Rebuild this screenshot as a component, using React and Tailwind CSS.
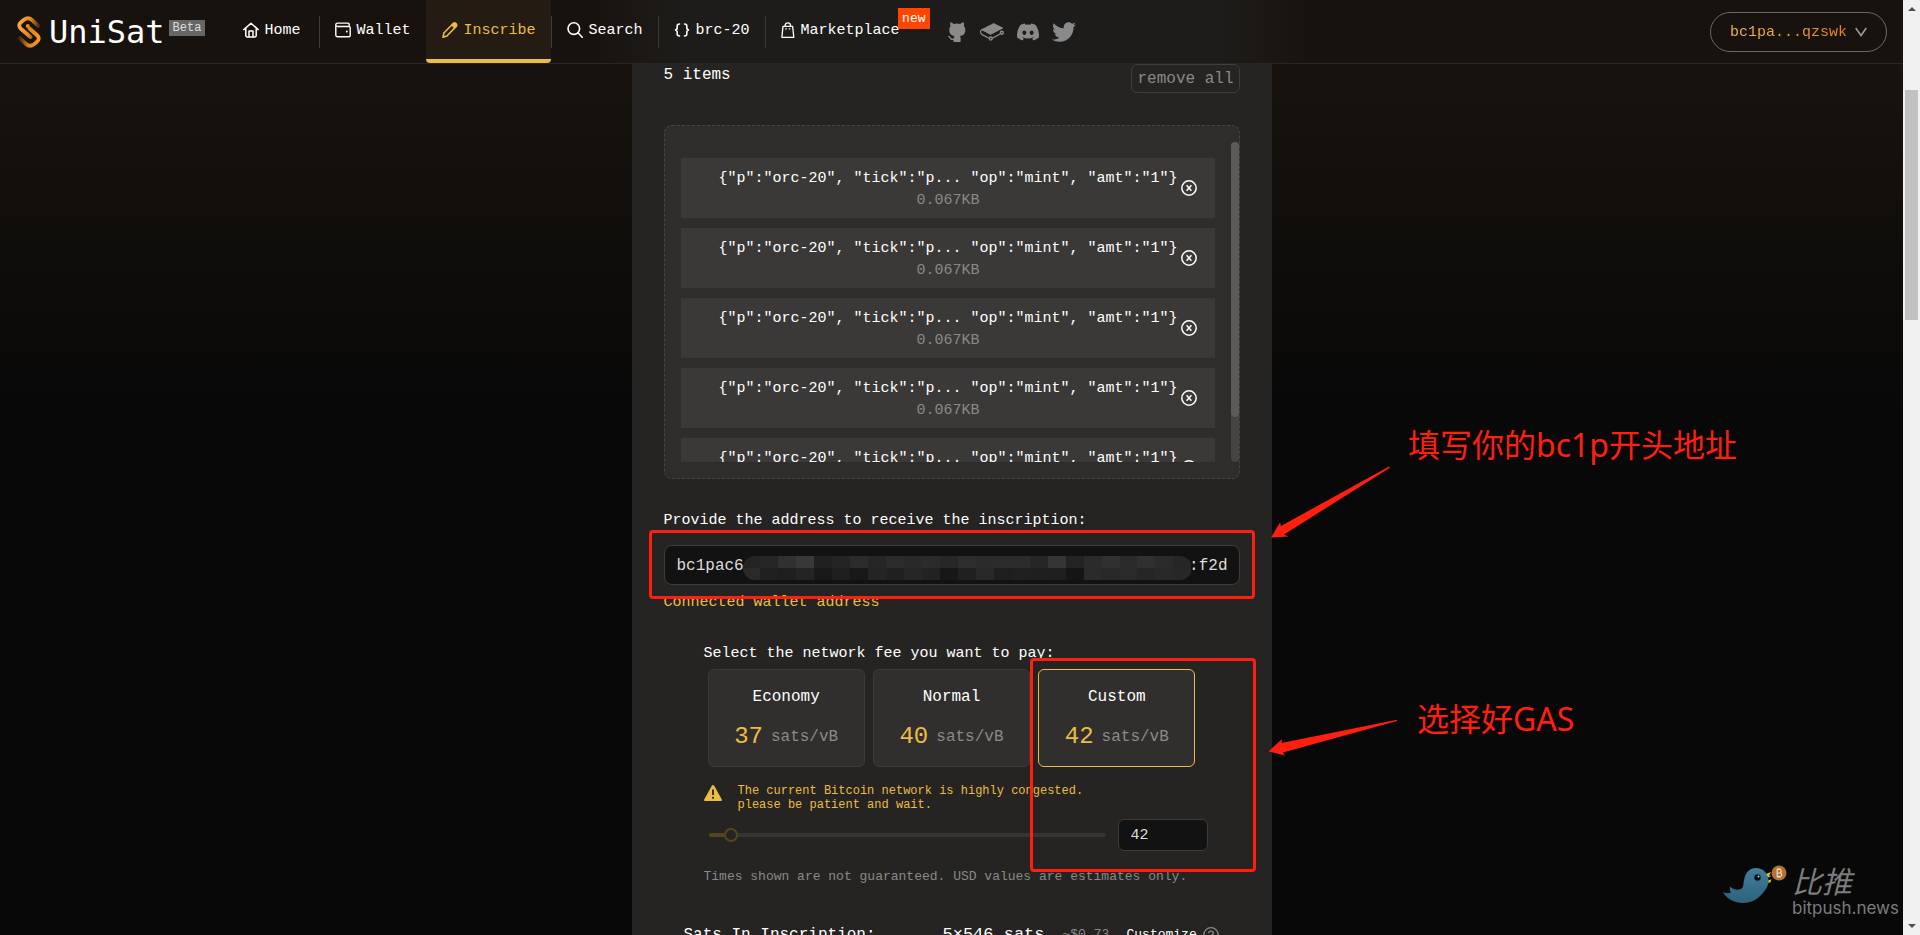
import { useState } from "react";
import { FaDiscord, FaTwitter } from "react-icons/fa";

const NAV = [
  { label: "Home", icon: HomeIcon },
  { label: "Wallet", icon: WalletIcon },
  { label: "Inscribe", icon: PencilIcon, active: true },
  { label: "Search", icon: SearchIcon },
  { label: "brc-20", icon: BracesIcon },
  { label: "Marketplace", icon: BagIcon, isNew: true },
];

const SOCIALS = [
  { label: "GitHub", icon: OctocatIcon },
  { label: "Docs", icon: GitbookIcon },
  { label: "Discord", icon: FaDiscord },
  { label: "Twitter", icon: FaTwitter },
];

const FEES = [
  { id: "economy", label: "Economy", rate: 37 },
  { id: "normal", label: "Normal", rate: 40 },
  { id: "custom", label: "Custom", rate: 42 },
];

const MINT_TEXT = '{"p":"orc-20", "tick":"p... "op":"mint", "amt":"1"}';

function HomeIcon() {
  return (
    <svg viewBox="0 0 16 16" className="size-4" fill="none" stroke="currentColor" strokeWidth="1.5" strokeLinejoin="round" strokeLinecap="round">
      <path d="M.8 7.6 8 1.2l7.2 6.4M2.8 6.2v7.4c0 .8.5 1.3 1.3 1.3h7.8c.8 0 1.3-.5 1.3-1.3V6.2" />
      <path d="M6 14.6V9h4v5.6" />
    </svg>
  );
}

function WalletIcon() {
  return (
    <svg viewBox="0 0 16 16" className="size-4" fill="none" stroke="currentColor" strokeWidth="1.4">
      <path d="M14.2 4.5V2.400c0-.8-.5-1.300-1.300-1.300H2.600C1.500 1.100.8 1.800.8 2.800s.7 1.700 1.800 1.700h11.300c.8 0 1.300.5 1.300 1.300v7.700c0 .8-.5 1.300-1.300 1.300H2.600c-1.100 0-1.800-.7-1.800-1.800V2.800" />
      <circle cx="11.8" cy="9.6" r="1" fill="currentColor" stroke="none" />
    </svg>
  );
}

function PencilIcon() {
  return (
    <svg viewBox="0 0 16 16" className="size-4" fill="none" stroke="currentColor" strokeWidth="1.6" strokeLinejoin="round">
      <path d="M1 15.200 1.900 11 11 1.700c.9-.9 2.200-.9 3-.1s.8 2.100-.1 3L4.900 14 1 15.200Z" />
      <path d="m10 3 2.800 2.800 1.600-1.800c.6-1-1.400-3.200-2.600-2.700Z" fill="currentColor" />
    </svg>
  );
}

function SearchIcon() {
  return (
    <svg viewBox="0 0 16 16" className="size-4" fill="none" stroke="currentColor" strokeWidth="1.6" strokeLinecap="round">
      <circle cx="6.8" cy="6.6" r="5.8" />
      <path d="m11 10.8 4.2 4.4" />
    </svg>
  );
}

function BracesIcon() {
  return (
    <svg viewBox="0 0 16 16" className="size-4" fill="none" stroke="currentColor" strokeWidth="1.6" strokeLinecap="round">
      <path d="M5.500 2C3.600 2 3.200 2.800 3.200 4v1.800C3.200 7 2.500 8 .9 8c1.600 0 2.300 1 2.300 2.200V12c0 1.200.4 2 2.300 2" />
      <path d="M10.500 2c1.900 0 2.300.8 2.300 2v1.800c0 1.200.7 2.200 2.300 2.200-1.600 0-2.300 1-2.300 2.200V12c0 1.200-.4 2-2.300 2" />
    </svg>
  );
}

function BagIcon() {
  return (
    <svg viewBox="0 0 14 16" className="h-4 w-3.5" fill="none" stroke="currentColor" strokeWidth="1.3" strokeLinejoin="round">
      <path d="M2 4.3h9.600l1.200 11H.9Z" />
      <path d="M4 4.300C4 2 5.200.8 6.800.8s2.800 1.200 2.800 3.500" />
      <path d="M4.300 6.900h1.500M7.800 6.900h1.500" />
    </svg>
  );
}

function OctocatIcon({ size }) {
  return (
    <svg viewBox="0 0 24 24" width={size} height={size} fill="currentColor">
      <path d="M6.300 2.200c1.300.2 2.500.9 3.500 1.700a15 15 0 0 1 6.400 0c1-.8 2.200-1.500 3.500-1.700.5 1.300.6 2.600.2 3.800 1 1.200 1.400 2.400 1.400 3.900 0 4-2.100 5.600-5.300 6.100.4.600.6 1.300.6 2.200V22H9.500v-2c-2.100.4-3.300-.3-4.100-1.900-.5-1-1-1.400-1.900-1.900 1.600-.5 2.600.3 3.400 1.500.7 1 1.500 1.200 2.700.8.1-1.100.4-1.900 1-2.500-3.300-.5-5.300-2.100-5.300-6.100 0-1.500.4-2.700 1.300-3.900-.4-1.200-.7-2.500-.3-3.800Z" />
    </svg>
  );
}

function GitbookIcon({ size }) {
  return (
    <svg viewBox="0 0 24 24" width={size} height={size} fill="currentColor">
      <path d="M10.802 17.77a.703.703 0 11-.002 1.406.703.703 0 01.002-1.406m11.024-4.347a.703.703 0 11.001-1.406.703.703 0 01-.001 1.406m0-2.876a2.176 2.176 0 00-2.174 2.174c0 .233.039.465.115.691l-7.181 3.823a2.165 2.165 0 00-1.784-.937c-.829 0-1.584.475-1.95 1.216l-6.451-3.402c-.682-.358-1.192-1.48-1.138-2.502.028-.533.212-.947.493-1.107.178-.1.392-.092.62.027l.042.023c1.71.9 7.304 3.847 7.54 3.956.363.169.565.237 1.185-.057l11.564-6.014c.17-.064.368-.227.368-.474 0-.342-.354-.477-.355-.477-.658-.315-1.669-.788-2.655-1.25-2.108-.987-4.497-2.105-5.546-2.655-.906-.474-1.635-.074-1.765.006l-.252.125C7.78 6.048 1.46 9.178 1.1 9.397.457 9.789.058 10.57.006 11.539c-.08 1.537.703 3.14 1.824 3.727l6.822 3.518a2.175 2.175 0 002.15 1.862 2.177 2.177 0 002.173-2.14l7.514-4.073c.38.298.853.461 1.337.461A2.176 2.176 0 0024 12.72a2.176 2.176 0 00-2.174-2.174" />
    </svg>
  );
}

function WarningIcon() {
  return (
    <svg viewBox="0 0 18 16" className="mt-0.5 h-4 w-[18px] shrink-0">
      <path d="M9 0c.5 0 .9.300 1.200.8l7.600 13.600c.5.900 0 1.600-.9 1.600H1.100c-.9 0-1.400-.7-.9-1.600L7.800.8C8.100.3 8.500 0 9 0Z" fill="currentColor" />
      <path d="M9 4.500v5.500M9 11.800v2" stroke="#252422" strokeWidth="1.800" />
    </svg>
  );
}

function Logo() {
  return (
    <svg viewBox="0 0 24 32" className="h-8 w-6" fill="none" strokeLinecap="round" strokeWidth="3.800">
      <defs>
        <linearGradient id="logoTop" gradientUnits="userSpaceOnUse" x1="2" y1="8" x2="23" y2="11">
          <stop offset="0" stopColor="#f6a83c" />
          <stop offset=".5" stopColor="#e88a1e" />
          <stop offset="1" stopColor="#3a1f10" />
        </linearGradient>
        <linearGradient id="logoBottom" gradientUnits="userSpaceOnUse" x1="22" y1="22" x2="1" y2="21">
          <stop offset="0" stopColor="#f39a1c" />
          <stop offset=".5" stopColor="#dc8018" />
          <stop offset="1" stopColor="#2c190e" />
        </linearGradient>
      </defs>
      <path d="M21.500 10 15 4c-2.500-2.200-5-2.400-8-.2L4.500 5.800C1.500 8.300 1.500 10.500 4.200 13l9.300 8" stroke="url(#logoTop)" />
      <path d="M2.500 22 9 28c2.500 2.200 5 2.400 8 .2l2.500-2c3-2.500 3-4.700.3-7.200l-7.300-6.500" stroke="url(#logoBottom)" />
      <circle cx="10.800" cy="10" r="2" fill="#f08a1c" />
    </svg>
  );
}

function Header() {
  return (
    <header className="relative z-20 flex h-16 shrink-0 items-center justify-between border-b border-[#292522] bg-[linear-gradient(90deg,#17120e_31%,#1e1c1a_36%,#1e1c1a_64%,#17120e_69%)] pr-4 pl-[17px]">
      <div className="flex h-full items-center">
        <a href="#home" className="flex items-start">
          <Logo />
          <span className="ml-2 font-['DejaVu_Sans_Mono',monospace] text-[32px] leading-8 text-white">UniSat</span>
          <span className="mt-1 ml-1 bg-[#666] px-1 text-xs leading-4 text-[#ddd]">Beta</span>
        </a>
        <nav className="ml-[22px] flex h-full items-center">
          {NAV.map(({ label, icon: Icon, active, isNew }, i) => (
            <div key={label} className="flex h-full items-center first:pr-[3px]">
              {i > 0 && <span className="-mr-px h-8 w-px bg-[#3d3a38]" />}
              <a
                href={`#${label.toLowerCase()}`}
                className={
                  active
                    ? "flex h-full items-center gap-[5px] rounded-b-sm border-b-4 border-[#ebbd42] bg-[#241b12] px-4 text-[15px] text-[#ebbd42]"
                    : "relative flex h-full items-center gap-[5px] border-b-4 border-transparent px-4 text-[15px] text-white"
                }
              >
                <Icon />
                <span className="pt-1">{label}</span>
                {isNew && (
                  <span className="absolute top-2 -right-3.5 bg-[#ff4500] px-1 text-[13px] leading-[21px] text-white">new</span>
                )}
              </a>
            </div>
          ))}
        </nav>
        <div className="ml-7 flex items-center gap-3 text-[#8a8a8a]">
          {SOCIALS.map(({ label, icon: Icon }) => (
            <a key={label} href={`#${label.toLowerCase()}`} aria-label={label}>
              <Icon size={24} />
            </a>
          ))}
        </div>
      </div>
      <button className="flex h-10 items-center gap-2 rounded-full border border-[#6b6763] px-[19px] text-[15px]">
        <span className="bg-linear-to-r from-[#f4bc4c] to-[#ef8010] bg-clip-text pt-1 text-transparent">bc1pa...qzswk</span>
        <svg viewBox="0 0 12 10" className="h-[10px] w-3" fill="none" stroke="#9a9794" strokeWidth="1.600">
          <path d="m.7 1 5.300 7.500L11.300 1" />
        </svg>
      </button>
    </header>
  );
}

function MintItem() {
  return (
    <li className="flex h-[60px] shrink-0 items-center bg-[#3a3937] pr-[19px] pl-[38px]">
      <div className="flex-1 pt-1 text-center text-[15px] leading-[22px] whitespace-nowrap">
        <p className="text-white">{MINT_TEXT}</p>
        <p className="text-[#8a8987]">0.067KB</p>
      </div>
      <button aria-label="Remove item" className="ml-[3px] text-white">
        <svg viewBox="0 0 16 16" className="size-4" fill="none" stroke="currentColor" strokeWidth="1.500">
          <circle cx="8" cy="8" r="7.200" />
          <path d="m5.600 5.200 4.800 5.600M10.400 5.200l-4.800 5.600" />
        </svg>
      </button>
    </li>
  );
}

// pixelated strip that hides the middle of the address
const MOSAIC = [
  ["#232323", "#262626", "#303030", "#383838", "#202020", "#242424", "#2c2c2c", "#262626", "#2c2c2c", "#292929", "#2b2b2b", "#272727", "#2d2d2d", "#2b2b2b", "#2c2c2c", "#2c2c2c", "#262626", "#353535", "#232323", "#2b2b2b", "#303030", "#2a2a2a", "#303030", "#2b2b2b", "#262626"],
  ["#2a2a2a", "#202020", "#1e1e1e", "#242424", "#181818", "#1e1e1e", "#181818", "#242424", "#202020", "#262626", "#222222", "#171717", "#202020", "#282828", "#1e1e1e", "#202020", "#1f1f1f", "#1e1e1e", "#151515", "#2b2b2b", "#282828", "#2a2a2a", "#262626", "#292929", "#272727"],
];

function Mosaic() {
  return (
    <div className="absolute top-[11px] right-12 left-[79px] overflow-hidden rounded-full">
      {MOSAIC.map((row, i) => (
        <div key={i} className="flex h-3">
          {row.map((color, j) => (
            <span key={j} className="flex-1" style={{ backgroundColor: color }} />
          ))}
        </div>
      ))}
    </div>
  );
}

function FeeCard({ fee, selected, onSelect }) {
  return (
    <button
      onClick={() => onSelect(fee.id)}
      aria-pressed={selected}
      className={
        selected
          ? "flex h-[98px] flex-1 flex-col items-center gap-3 rounded-md border border-[#ebbd42] bg-[#302f2d] pt-[15px]"
          : "flex h-[98px] flex-1 flex-col items-center gap-3 rounded-md border border-[#3b3a38] bg-[#302f2d] pt-[15px]"
      }
    >
      <span className="text-base leading-6 text-white">{fee.label}</span>
      <span className="flex items-center gap-2 leading-8">
        <span className="text-2xl leading-8 text-[#ebbd42]">{fee.rate}</span>
        <span className="text-base leading-8 text-[#8a8987]">sats/vB</span>
      </span>
    </button>
  );
}

function Panel() {
  const [selected, setSelected] = useState("custom");
  const [rate, setRate] = useState(42);

  return (
    <main className="mx-auto w-full max-w-[640px] bg-[#252422] px-8">
      <div className="flex items-start justify-between">
        <p className="text-base leading-[22px] text-white">5 items</p>
        <button className="h-[29px] rounded-md border border-[#3f3e3c] px-[5px] text-base leading-7 text-[#8a8987]">remove all</button>
      </div>

      <div className="mt-8 flex rounded-lg border border-dashed border-[#454442] bg-[#2e2d2b] py-4 pl-4">
        <ul className="flex h-80 flex-1 flex-col gap-2.5 overflow-hidden pt-4">
          {[0, 1, 2, 3, 4].map((n) => (
            <MintItem key={n} />
          ))}
        </ul>
        <div className="ml-4 h-80 w-2 rounded-full bg-[#454442]">
          <div className="h-[275px] rounded-full bg-[#5c5b59]" />
        </div>
      </div>

      <label htmlFor="address" className="mt-8 block text-[15px] leading-5 text-white">
        Provide the address to receive the inscription:
      </label>
      <div className="relative mt-3.5">
        <input
          id="address"
          defaultValue="bc1pac6"
          className="h-10 w-full rounded-lg border border-[#3d3c3b] bg-[#121212] px-3 pt-0.5 text-base text-[#dcdcdc] outline-none"
        />
        <Mosaic />
        <span className="absolute top-[9px] right-3 text-base leading-6 text-[#dcdcdc]">:f2d</span>
        <div className="pointer-events-none absolute -inset-x-[15px] -top-[15px] -bottom-3.5 rounded-sm border-3 border-[#ff1f0f]" />
      </div>
      <p className="mt-2 text-[15px] leading-5 text-[#ebbd42]">Connected wallet address</p>

      <section className="relative mt-[31px] px-10">
        <h2 className="text-[15px] leading-5 text-white">Select the network fee you want to pay:</h2>
        <div className="mx-1 mt-[5px] flex gap-2">
          {FEES.map((fee) => (
            <FeeCard key={fee.id} fee={fee} selected={fee.id === selected} onSelect={setSelected} />
          ))}
        </div>
        <div className="mt-4 flex items-start gap-4 text-[#ebbd42]">
          <WarningIcon />
          <p className="pt-px text-xs leading-[14px]">
            The current Bitcoin network is highly congested.
            <br />
            please be patient and wait.
          </p>
        </div>
        <div className="mt-[7px] -mr-2 flex items-center gap-3 pl-[5px]">
          <div className="relative flex h-4 flex-1 items-center">
            <div className="h-1 w-full rounded-full bg-[#353432]">
              <div className="h-1 w-4 rounded-full bg-[#54451f]" />
            </div>
            <span className="absolute left-[15px] size-3.5 rounded-full border-2 border-[#54451f] bg-[#252422]" />
            <input
              type="range"
              min="1"
              max="800"
              value={rate}
              onChange={(e) => setRate(Number(e.target.value))}
              aria-label="Fee rate"
              className="absolute inset-0 w-full opacity-0"
            />
          </div>
          <input
            aria-label="Custom fee rate"
            value={rate}
            onChange={(e) => setRate(Number(e.target.value) || 0)}
            className="h-8 w-[90px] rounded-md border border-[#3d3c3b] bg-[#121212] px-3 text-[15px] text-[#dcdcdc] outline-none"
          />
        </div>
        <p className="mt-4 text-[13px] leading-5 text-[#8a8987]">Times shown are not guaranteed. USD values are estimates only.</p>
        <div className="pointer-events-none absolute top-3.5 -right-4 left-[366px] h-[214px] rounded-sm border-3 border-[#ff1f0f]" />
      </section>

      <div className="mt-9 ml-5 flex items-center whitespace-nowrap text-white">
        <span className="w-[259px] text-base leading-6">Sats In Inscription:</span>
        <span className="w-[120px] text-[17px] leading-6">5×546 sats</span>
        <span className="w-16 text-[13px] leading-6 text-[#8a8987]">~$0.73</span>
        <button className="flex items-center gap-1.5 text-[13px] leading-6">
          Customize
          <svg viewBox="0 0 16 16" className="size-4" fill="none" stroke="#8a8987" strokeWidth="1.300">
            <circle cx="8" cy="8" r="7.300" />
            <path d="M5.700 6.300C5.700 4.900 6.700 4.200 8 4.200s2.300.8 2.300 2S8.200 7.700 8 9.200M8 10.800v1.400" />
          </svg>
        </button>
      </div>
    </main>
  );
}

function Annotations() {
  return (
    <div className="pointer-events-none absolute inset-0 z-10 font-['Noto_Sans','Noto_Sans_CJK_SC',sans-serif] text-[32px] leading-10 whitespace-nowrap text-[#ff1f0f]">
      <p className="absolute top-[425px] left-[1408px]">填写你的bc1p开头地址</p>
      <p className="absolute top-[699px] left-[1417px]">选择好GAS</p>
      <svg className="absolute top-[460px] left-[1260px] h-[300px] w-[140px]" viewBox="1260 460 140 300" fill="#ff1f0f">
        <path d="M1389 466.500 1281 526 1280 522.500 1271 537.500 1288.500 536.500 1284 534.500 1390 467.800Z" />
        <path d="M1397 719.800 1281.500 743 1282 739 1268.500 751.500 1285 755.500 1283 752.500 1397 721Z" />
      </svg>
    </div>
  );
}

function Watermark() {
  return (
    <div className="pointer-events-none absolute right-1 bottom-[17px] z-10 flex items-start gap-1 text-[#7c7c7c]">
      <svg viewBox="0 0 66 44" className="mt-px h-11 w-[66px]">
        <defs>
          <linearGradient id="bird" x1="0" y1="0" x2="0" y2="1">
            <stop offset="0" stopColor="#417f9b" />
            <stop offset="1" stopColor="#2d627c" />
          </linearGradient>
        </defs>
        <path d="M1 29c3 1.500 6 1.500 8 .5-1-1.500-1.500-3.500-1-6 2.500 3 7 4 11 2.500 3-1.500 2-5 3-9C23.500 9 28 5 34 5c7 0 12.500 5.500 12.500 12.500 0 5-2 8-4.500 11-5 7-12 11.500-21 11.500C12 40 5 36 1 29Z" fill="url(#bird)" />
        <circle cx="35.500" cy="14.500" r="3.200" fill="#0d0d0d" />
        <circle cx="36.500" cy="13.500" r=".9" fill="#ddd" />
        <path d="m44 11 5-2-1.800 3.800 2 .2-2.700 1.500ZM46.500 17l3-.5-1.200 3-2 .5Z" fill="#e0c020" />
        <circle cx="57" cy="10" r="7.500" fill="#b8702c" />
        <path d="M55.200 6.500v7h2.600c2.600 0 2.600-3.500 0-3.500h-2.600 2.300c2.300 0 2.300-3.500 0-3.500ZM56 5v1.500M58 5v1.500M56 13.500V15M58 13.500V15" fill="none" stroke="#e8dccb" strokeWidth="1.200" />
      </svg>
      <div>
        <p className="font-['Noto_Sans_CJK_SC',sans-serif] text-[30px] leading-9 italic">比推</p>
        <p className="font-[Inter,sans-serif] text-[17px] leading-5">bitpush.news</p>
      </div>
    </div>
  );
}

function Scrollbar() {
  return (
    <div aria-hidden="true" className="flex w-[17px] shrink-0 flex-col items-center bg-[#f1f1f1] py-[7px]">
      <svg viewBox="0 0 8 4" className="h-1 w-2 shrink-0" fill="#505050">
        <path d="M0 4 4 0l4 4Z" />
      </svg>
      <div className="mt-[79px] h-[230px] w-[13px] bg-[#c1c1c1]" />
      <svg viewBox="0 0 8 4" className="mt-auto h-1 w-2 shrink-0" fill="#505050">
        <path d="m0 0 4 4 4-4Z" />
      </svg>
    </div>
  );
}

export default function App() {
  return (
    <div className="flex h-screen overflow-hidden font-['Liberation_Mono',monospace]">
      <div className="relative flex min-w-0 flex-1 flex-col overflow-hidden bg-[#080808] bg-linear-to-b from-[#1b150f] to-[#080808] to-45%">
        <Header />
        <Panel />
        <Annotations />
        <Watermark />
      </div>
      <Scrollbar />
    </div>
  );
}
